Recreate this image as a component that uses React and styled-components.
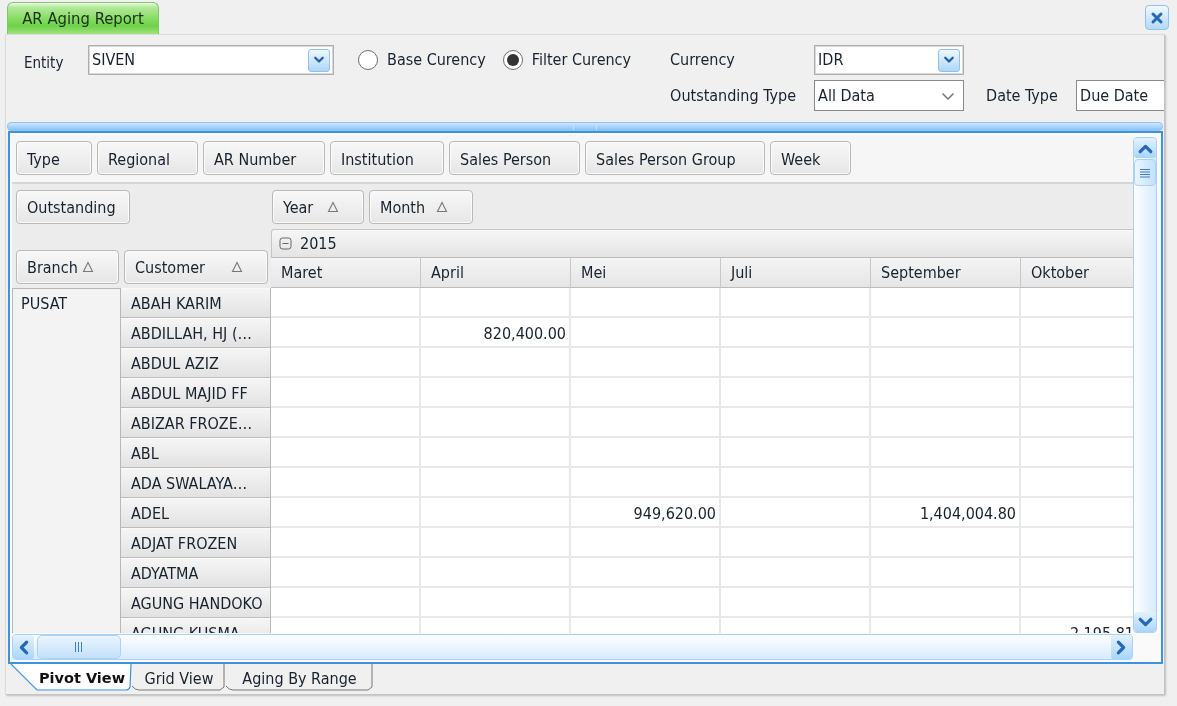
import React from "react";
import styled, { createGlobalStyle } from "styled-components";

const Global = createGlobalStyle`
  html, body { margin: 0; padding: 0; background: #f0f0f0; }
  * { box-sizing: border-box; }
  #root { width: 1177px; height: 706px; overflow: hidden; }
`;

const FONT = `"DejaVu Sans Condensed", "DejaVu Sans", sans-serif`;

const Page = styled.div`
  width: 1177px; height: 706px; background: #f0f0f0; overflow: hidden;
  font: 16px ${FONT}; color: #18222e; filter: blur(0.35px);
  display: flex; flex-direction: column;
`;
const TabStrip = styled.div`
  height: 34px; flex: none; display: flex; justify-content: space-between;
  padding: 2px 8px 0 7px;
`;
const ReportTab = styled.div`
  width: 152px; height: 33px; border: 1px solid #7fc76a; border-bottom: none;
  border-radius: 6px 6px 0 0; text-align: center; line-height: 32px; color: #1c2e1c; font-size: 16.5px;
  background: linear-gradient(#eef9e6 0%, #b3e89a 14%, #85dc62 50%, #6fd24a 72%, #a5e684 100%);
`;
const CloseButton = styled.div`
  width: 24px; height: 25px; margin-top: 3px; border: 1px solid #8fc3ee; border-radius: 4px;
  display: flex; align-items: center; justify-content: center;
  background: linear-gradient(#f2f9ff, #cfe6fb 55%, #b4d9fa);
  color: #2468b8;
`;
const Panel = styled.div`
  width: 1160px; height: 661px; margin-left: 5px; flex: none;
  border: 1px solid #dcdcdc; border-right-color: #c4c4c4; border-bottom-color: #c4c4c4;
  box-shadow: 1px 1px 2px #bdbdbd; border-radius: 2px;
  background: #f0f0f0; display: flex; flex-direction: column;
`;
const Form = styled.div`
  height: 87px; flex: none; display: flex; padding: 10px 0 0 18px; overflow: hidden;
`;
const EntityLabel = styled.div`
  width: 64px; height: 30px; line-height: 36px; flex: none; font-size: 15px;
`;
const Combo = styled.div`
  width: ${p => p.$w}px; height: 30px; flex: none; background: #fff;
  border: 1px solid #aeaeae; box-shadow: inset 0 0 0 1px #d8d8d8;
  display: flex; align-items: center; justify-content: space-between;
  padding: 0 3px 0 3px; line-height: 26px;
`;
const ComboArrow = styled.div`
  width: 22px; height: 23px; border: 1px solid #8fc3ee; border-radius: 3px;
  display: flex; align-items: center; justify-content: center; color: #1f5fae;
  background: linear-gradient(#f0f8ff, #cde5fb 55%, #aed6fa);
`;
const RadioGroup = styled.div`
  display: flex; height: 30px; align-items: center; margin-left: 24px; flex: none;
`;
const RadioItem = styled.div`
  display: flex; align-items: center; gap: 9px; margin-right: 17px; line-height: 30px;
`;
const RadioDot = styled.span`
  width: 20px; height: 20px; border-radius: 50%; border: 1.5px solid #6e6e6e; background: #fff;
  display: flex; align-items: center; justify-content: center; flex: none;
  &::after { content: ""; width: 12px; height: 12px; border-radius: 50%; background: ${p => p.$on ? "#333" : "transparent"}; }
`;
const RightGrid = styled.div`
  display: grid; margin-left: 22px; flex: none;
  grid-template-columns: 144px 150px 22px 90px 90px; grid-template-rows: 30px 31px; row-gap: 5px;
  align-items: center;
`;
const GridLabel = styled.div`line-height: 30px; white-space: nowrap;`;
const SelectBox = styled.div`
  width: ${p => p.$w}px; height: 31px; background: #fff; border: 1.5px solid #8a8a8a;
  display: flex; align-items: center; justify-content: space-between;
  padding: 0 4px 0 3px; white-space: nowrap; overflow: hidden;
`;
const SelectChevron = styled.span`
  color: #777; display: flex; margin-right: 3px; margin-top: 2px;
`;
const Splitter = styled.div`
  height: 9px; flex: none; margin: 0 1px 0 1px; border: 1px solid #8fc5f2; border-radius: 4px;
  background: linear-gradient(#cfe6fc, #8cc4f6); display: flex; justify-content: center;
`;
const SplitGrip = styled.div`
  width: 24px; border-left: 1px solid #c8e2fa; border-right: 1px solid #c8e2fa;
`;
const PivotBox = styled.div`
  height: 533px; flex: none; margin: 0 1px 0 2px; border: 2px solid #3f93db; background: #fafafa;
  padding: 2px 0 2px 2px; display: flex; flex-direction: column;
`;
const PivotTop = styled.div`flex: 1; min-height: 0; display: flex;`;
const PivotMain = styled.div`
  width: 1121px; flex: none; overflow: hidden; display: flex; flex-direction: column;
`;
const FilterRow = styled.div`
  height: 49px; flex: none; background: #f6f6f6; border-bottom: 2px solid #d6d6d6;
  display: flex; gap: 5px; padding: 6px 0 0 4px;
`;
const FieldButton = styled.div`
  width: ${p => p.$w}px; height: 34px; flex: none; display: flex; align-items: center;
  justify-content: space-between; padding: ${p => p.$pt ?? 0}px ${p => p.$pr ?? 10}px 0 10px; white-space: nowrap;
  border: 1px solid #b9b9b9; border-radius: 4px; box-shadow: inset 0 0 0 1px #fbfbfb;
  background: linear-gradient(#f8f8f8, #e6e6e6);
`;
const HeaderArea = styled.div`
  height: 104px; flex: none; display: flex; background: #ececec;
`;
const HeaderLeft = styled.div`
  width: 259px; flex: none; padding: 6px 0 0 4px; display: flex; flex-direction: column; justify-content: space-between;
`;
const BranchRow = styled.div`display: flex; gap: 5px; padding-bottom: 4px;`;
const HeaderRight = styled.div`flex: 1; min-width: 0; display: flex; flex-direction: column;`;
const ColumnFields = styled.div`display: flex; gap: 5px; height: 45px; padding: 6px 0 0 1px; flex: none;`;
const YearBar = styled.div`
  height: 29px; flex: none; display: flex; align-items: center; gap: 8px; padding-left: 7px;
  border: 1px solid #c6c6c6; border-right: none; border-bottom-color: #bcbcbc; border-radius: 3px 0 0 0;
  background: linear-gradient(#f6f6f6, #e4e4e4);
`;
const MonthRow = styled.div`display: flex; height: 30px; flex: none;`;
const MonthCell = styled.div`
  width: 150px; flex: none; padding-left: 10px; line-height: 30px; border-right: 1px solid #c8c8c8;
  border-bottom: 1px solid #bdbdbd; background: linear-gradient(#f4f4f4, #e6e6e6);
`;
const Body = styled.div`flex: 1; min-height: 0; display: flex; overflow: hidden;`;
const BranchCol = styled.div`
  width: 109px; flex: none; height: 360px; background: #f3f3f3; padding: 4px 0 0 8px;
  border: 1px solid #b8b8b8; line-height: 22px;
`;
const Rows = styled.div`flex: 1; min-width: 0;`;
const Row = styled.div`display: flex; height: 30px;`;
const CustomerCell = styled.div`
  width: 150px; flex: none; padding-left: 10px; line-height: 31px; white-space: nowrap;
  border-bottom: 1px solid #bdbdbd; border-right: 1px solid #b8b8b8;
  box-shadow: inset 0 1px 0 #fafafa;
  background: linear-gradient(#f6f6f6, #e2e2e2);
`;
const DataCell = styled.div`
  width: 150px; flex: none; background: #fff; text-align: right; padding-right: 3px; line-height: 31px;
  border-right: 2px solid #e8e8e8; border-bottom: 2px solid #e8e8e8;
`;
const VScroll = styled.div`
  width: 24px; flex: none; margin-top: 2px; display: flex; flex-direction: column;
  border: 1px solid #a9d2f4; border-radius: 4px;
  background: linear-gradient(90deg, #fff, #d7eafc);
`;
const HScroll = styled.div`
  width: 1121px; height: 26px; flex: none; margin-top: 1px; display: flex; align-items: center;
  border: 1px solid #a9d2f4; border-radius: 4px; justify-content: space-between;
  background: linear-gradient(#fff, #d7eafc);
`;
const ScrollButton = styled.div`
  width: ${p => p.$w}; height: ${p => p.$h}; flex: none; display: flex; align-items: center; justify-content: center;
  color: #2468b8; border-radius: 3px;
  background: linear-gradient(#e4f2ff, #a9d5fb);
`;
const VThumb = styled.div`
  height: 27px; margin-top: 1px; flex: none; border: 1px solid #a9d2f4; border-radius: 4px; color: #3d7fc0;
  background: linear-gradient(90deg, #eaf5ff, #c4e0fb);
  display: flex; align-items: center; justify-content: center;
`;
const HThumb = styled.div`
  width: 84px; height: 24px; margin-left: 3px; border: 1px solid #a9d2f4; border-radius: 5px; color: #3d7fc0;
  background: linear-gradient(#eaf5ff, #c4e0fb);
  display: flex; align-items: center; justify-content: center;
`;
const Spacer = styled.div`flex: 1;`;
const BottomTabs = styled.div`
  height: 28px; flex: none; display: flex; margin-left: 4px;
`;
const ViewTab = styled.div`
  position: relative; width: ${p => p.$w}px; height: 28px; flex: none; text-align: center;
  padding-left: ${p => p.$pl ?? 0}px; line-height: 29px; font-weight: ${p => p.$on ? 700 : 400};
  font-family: ${p => p.$on ? `"DejaVu Sans", sans-serif` : "inherit"}; font-size: ${p => p.$on ? "14.5px" : "16px"};
  color: ${p => p.$on ? "#111" : "inherit"};
  & > span { position: relative; }
`;
const TabShape = styled.svg`position: absolute; left: 0; top: 0;`;

const Chevron = ({ dir = "down", size = 17, weight = 3 }) => {
  const d = { down: "M3 5l5 5 5-5", up: "M3 11l5-5 5 5", left: "M11 3l-5 5 5 5", right: "M5 3l5 5-5 5" }[dir];
  return (
    <svg width={size} height={size} viewBox="0 0 16 16" fill="none" stroke="currentColor" strokeWidth={weight} strokeLinecap="round" strokeLinejoin="round">
      <path d={d} />
    </svg>
  );
};
const Grip = ({ vertical }) => (
  <svg width="12" height="12" viewBox="0 0 12 12" stroke="currentColor" strokeWidth="1">
    {vertical
      ? <path d="M1 2.5h10M1 5h10M1 7.5h10M1 10h10" />
      : <path d="M2.5 1v10M5.5 1v10M8.5 1v10" />}
  </svg>
);
const SortMark = () => (
  <svg width="12" height="12" viewBox="0 0 12 12" fill="none" stroke="#777" strokeWidth="1.1">
    <path d="M6 1.5L1.5 10.5h9z" />
  </svg>
);
const Minus = () => (
  <svg width="13" height="13" viewBox="0 0 13 13" fill="none" stroke="#666">
    <rect x="1" y="1" width="11" height="11" rx="2.5" />
    <path d="M3.5 6.5h6" />
  </svg>
);

const filters = [["Type", 76], ["Regional", 101], ["AR Number", 122], ["Institution", 114], ["Sales Person", 131], ["Sales Person Group", 180], ["Week", 81]];
const months = ["Maret", "April", "Mei", "Juli", "September", "Oktober"];
const customers = [
  ["ABAH KARIM"], ["ABDILLAH, HJ (…", { 1: "820,400.00" }], ["ABDUL AZIZ"], ["ABDUL MAJID FF"],
  ["ABIZAR FROZE…"], ["ABL"], ["ADA SWALAYA…"], ["ADEL", { 2: "949,620.00", 4: "1,404,004.80" }],
  ["ADJAT FROZEN"], ["ADYATMA"], ["AGUNG HANDOKO"], ["AGUNG KUSMA", { 5: "2,195,810.00" }],
];

export default function App() {
  return (
    <Page>
      <Global />
      <TabStrip>
        <ReportTab>AR Aging Report</ReportTab>
        <CloseButton>
          <svg width="14" height="14" viewBox="0 0 14 14" fill="none" stroke="currentColor" strokeWidth="3" strokeLinecap="round"><path d="M3 3l8 8M11 3l-8 8" /></svg>
        </CloseButton>
      </TabStrip>
      <Panel>
        <Form>
          <EntityLabel>Entity</EntityLabel>
          <Combo $w={246}>SIVEN<ComboArrow><Chevron size={12} /></ComboArrow></Combo>
          <RadioGroup>
            <RadioItem><RadioDot />Base Curency</RadioItem>
            <RadioItem><RadioDot $on />Filter Curency</RadioItem>
          </RadioGroup>
          <RightGrid>
            <GridLabel>Currency</GridLabel>
            <Combo $w={150}>IDR<ComboArrow><Chevron size={12} /></ComboArrow></Combo>
            <span /><span /><span />
            <GridLabel>Outstanding Type</GridLabel>
            <SelectBox $w={150}>All Data<SelectChevron><Chevron weight={1.6} size={16} /></SelectChevron></SelectBox>
            <span />
            <GridLabel>Date Type</GridLabel>
            <SelectBox $w={90}>Due Date</SelectBox>
          </RightGrid>
        </Form>
        <Splitter><SplitGrip /></Splitter>
        <PivotBox>
          <PivotTop>
            <PivotMain>
              <FilterRow>
                {filters.map(([t, w]) => <FieldButton key={t} $w={w} $pt={2}>{t}</FieldButton>)}
              </FilterRow>
              <HeaderArea>
                <HeaderLeft>
                  <FieldButton $w={114}>Outstanding</FieldButton>
                  <BranchRow>
                    <FieldButton $w={103} $pr={24}>Branch <SortMark /></FieldButton>
                    <FieldButton $w={144} $pr={24}>Customer <SortMark /></FieldButton>
                  </BranchRow>
                </HeaderLeft>
                <HeaderRight>
                  <ColumnFields>
                    <FieldButton $w={92} $pr={24}>Year <SortMark /></FieldButton>
                    <FieldButton $w={104} $pr={24}>Month <SortMark /></FieldButton>
                  </ColumnFields>
                  <YearBar><Minus />2015</YearBar>
                  <MonthRow>
                    {months.map(m => <MonthCell key={m}>{m}</MonthCell>)}
                  </MonthRow>
                </HeaderRight>
              </HeaderArea>
              <Body>
                <BranchCol>PUSAT</BranchCol>
                <Rows>
                  {customers.map(([name, vals = {}]) => (
                    <Row key={name}>
                      <CustomerCell>{name}</CustomerCell>
                      {months.map((m, i) => <DataCell key={m}>{vals[i]}</DataCell>)}
                    </Row>
                  ))}
                </Rows>
              </Body>
            </PivotMain>
            <VScroll>
              <ScrollButton $w="100%" $h="20px"><Chevron dir="up" /></ScrollButton>
              <VThumb><Grip vertical /></VThumb>
              <Spacer />
              <ScrollButton $w="100%" $h="20px"><Chevron dir="down" /></ScrollButton>
            </VScroll>
          </PivotTop>
          <HScroll>
            <ScrollButton $w="21px" $h="24px"><Chevron dir="left" /></ScrollButton>
            <HThumb><Grip /></HThumb>
            <Spacer />
            <ScrollButton $w="21px" $h="24px"><Chevron dir="right" /></ScrollButton>
          </HScroll>
        </PivotBox>
        <BottomTabs>
          <ViewTab $w={122} $pl={22} $on>
            <TabShape width="122" height="28" fill="#fff" stroke="#3f93db" strokeWidth="1.2">
              <path d="M1 0L27 26H116q3 0 4-3L121 0" />
            </TabShape>
            <span>Pivot View</span>
          </ViewTab>
          <ViewTab $w={94}>
            <TabShape width="94" height="28" fill="#f0f0f0" stroke="#777" strokeWidth="1">
              <path d="M0 22q3 4 7 4H88l4-3V0" />
            </TabShape>
            <span>Grid View</span>
          </ViewTab>
          <ViewTab $w={147}>
            <TabShape width="147" height="28" fill="#f0f0f0" stroke="#777" strokeWidth="1">
              <path d="M0 22q3 4 7 4H142l4-3V0" />
            </TabShape>
            <span>Aging By Range</span>
          </ViewTab>
        </BottomTabs>
      </Panel>
    </Page>
  );
}
